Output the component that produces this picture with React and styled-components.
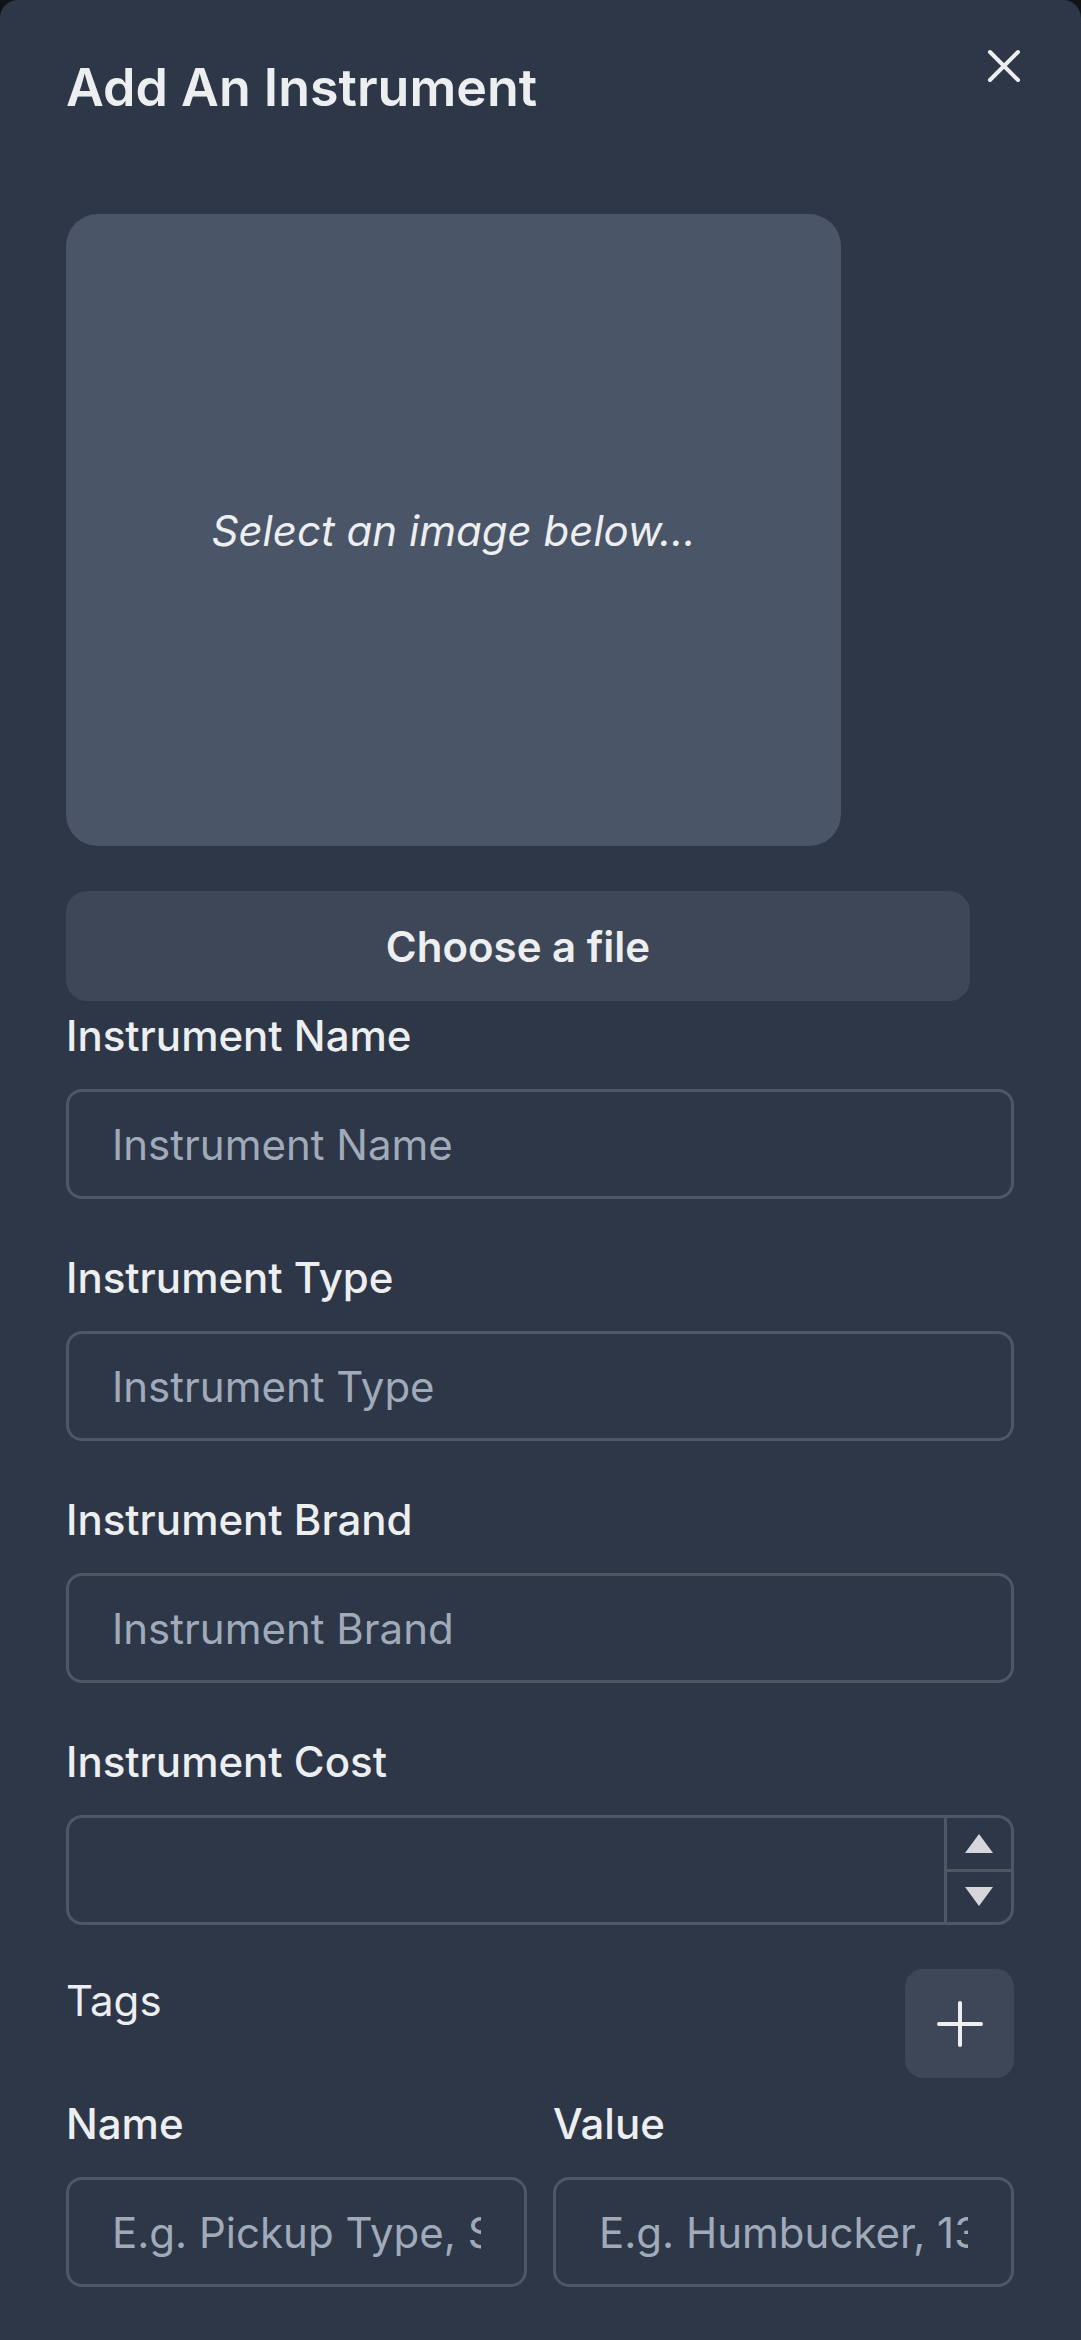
import React from "react";
import styled, { createGlobalStyle } from "styled-components";

const GlobalStyle = createGlobalStyle`
  html, body {
    margin: 0;
    padding: 0;
    background: #111318;
  }
  body {
    font-family: Inter, "Noto Sans", sans-serif;
  }
  *, *::before, *::after {
    box-sizing: border-box;
  }
`;

const Panel = styled.div`
  position: relative;
  min-height: 2340px;
  background: #2d3748;
  border-radius: 18px 18px 0 0;
  padding: 56px 67px 0 66px;
  color: #edeef0;
  display: flex;
  flex-direction: column;
  align-items: flex-start;
`;

const Title = styled.h2`
  margin: 0;
  font-size: 52px;
  font-weight: 600;
  line-height: 64px;
  color: #edeef0;
`;

const CloseButton = styled.button`
  position: absolute;
  top: 24px;
  right: 35px;
  width: 84px;
  height: 84px;
  border: none;
  background: transparent;
  padding: 0;
  display: flex;
  align-items: center;
  justify-content: center;
  cursor: pointer;
`;

const ImagePreview = styled.div`
  margin-top: 94px;
  width: 775px;
  height: 632px;
  background: #4a5568;
  border-radius: 32px;
  display: flex;
  align-items: center;
  justify-content: center;
  font-size: 42px;
  font-style: italic;
  font-weight: 400;
  color: #edeef0;
`;

const FileButton = styled.button`
  margin-top: 45px;
  width: 904px;
  height: 110px;
  border: none;
  border-radius: 21px;
  background: #3e4757;
  color: #edeef0;
  font-family: inherit;
  font-size: 42px;
  font-weight: 600;
  cursor: pointer;
`;

const Form = styled.div`
  margin-top: 3px;
  width: 100%;
  display: flex;
  flex-direction: column;
  gap: 47px;
`;

const Field = styled.div`
  display: flex;
  flex-direction: column;
  gap: 22px;
  min-width: 0;
`;

const Label = styled.label`
  font-size: 42px;
  font-weight: 500;
  line-height: 63px;
  color: #edeef0;
`;

const TextInput = styled.input`
  width: 100%;
  height: 110px;
  border: 3px solid #4f5765;
  border-radius: 16px;
  background: transparent;
  padding: 0 43px;
  font-family: inherit;
  font-size: 42px;
  color: #edeef0;
  outline: none;
  min-width: 0;
  &::placeholder {
    color: #a0aab9;
  }
`;

const NumberBox = styled.div`
  display: flex;
  height: 110px;
  border: 3px solid #4f5765;
  border-radius: 16px;
  overflow: hidden;
`;

const NumberField = styled.input`
  flex: 1;
  min-width: 0;
  border: none;
  background: transparent;
  padding: 0 43px;
  font-family: inherit;
  font-size: 42px;
  color: #edeef0;
  outline: none;
`;

const Stepper = styled.div`
  width: 67px;
  border-left: 3px solid #4f5765;
  display: flex;
  flex-direction: column;
`;

const StepButton = styled.div`
  flex: 1;
  display: flex;
  align-items: center;
  justify-content: center;
  border-top: ${(p) => (p.$bottom ? "3px solid #4f5765" : "none")};
`;

const TagsHeader = styled.div`
  margin-top: 44px;
  width: 100%;
  display: flex;
  justify-content: space-between;
  align-items: flex-start;
`;

const TagsTitle = styled.span`
  font-size: 42px;
  font-weight: 400;
  line-height: 63px;
  color: #edeef0;
`;

const AddButton = styled.button`
  width: 109px;
  height: 109px;
  border: none;
  border-radius: 18px;
  background: #3e4757;
  display: flex;
  align-items: center;
  justify-content: center;
  padding: 0;
  cursor: pointer;
`;

const TagGrid = styled.div`
  margin-top: 14px;
  width: 100%;
  display: grid;
  grid-template-columns: 1fr 1fr;
  column-gap: 26px;
`;

export default function App() {
  return (
    <>
      <GlobalStyle />
      <Panel>
        <Title>Add An Instrument</Title>
        <CloseButton aria-label="Close">
          <svg width="34" height="34" viewBox="0 0 34 34">
            <path
              d="M3 3 L31 31 M31 3 L3 31"
              stroke="#edeef0"
              strokeWidth="4"
              strokeLinecap="round"
            />
          </svg>
        </CloseButton>

        <ImagePreview>Select an image below...</ImagePreview>
        <FileButton>Choose a file</FileButton>

        <Form>
          <Field>
            <Label>Instrument Name</Label>
            <TextInput placeholder="Instrument Name" />
          </Field>
          <Field>
            <Label>Instrument Type</Label>
            <TextInput placeholder="Instrument Type" />
          </Field>
          <Field>
            <Label>Instrument Brand</Label>
            <TextInput placeholder="Instrument Brand" />
          </Field>
          <Field>
            <Label>Instrument Cost</Label>
            <NumberBox>
              <NumberField type="text" inputMode="decimal" />
              <Stepper>
                <StepButton>
                  <svg width="28" height="19" viewBox="0 0 28 19">
                    <polygon points="14,0 28,19 0,19" fill="#d5d7db" />
                  </svg>
                </StepButton>
                <StepButton $bottom>
                  <svg width="28" height="19" viewBox="0 0 28 19">
                    <polygon points="0,0 28,0 14,19" fill="#d5d7db" />
                  </svg>
                </StepButton>
              </Stepper>
            </NumberBox>
          </Field>
        </Form>

        <TagsHeader>
          <TagsTitle>Tags</TagsTitle>
          <AddButton aria-label="Add tag">
            <svg width="46" height="46" viewBox="0 0 46 46">
              <path
                d="M23 2 L23 44 M2 23 L44 23"
                stroke="#edeef0"
                strokeWidth="4"
                strokeLinecap="round"
              />
            </svg>
          </AddButton>
        </TagsHeader>

        <TagGrid>
          <Field>
            <Label>Name</Label>
            <TextInput placeholder="E.g. Pickup Type, Scale Length" />
          </Field>
          <Field>
            <Label>Value</Label>
            <TextInput placeholder="E.g. Humbucker, 13 inches" />
          </Field>
        </TagGrid>
      </Panel>
    </>
  );
}
